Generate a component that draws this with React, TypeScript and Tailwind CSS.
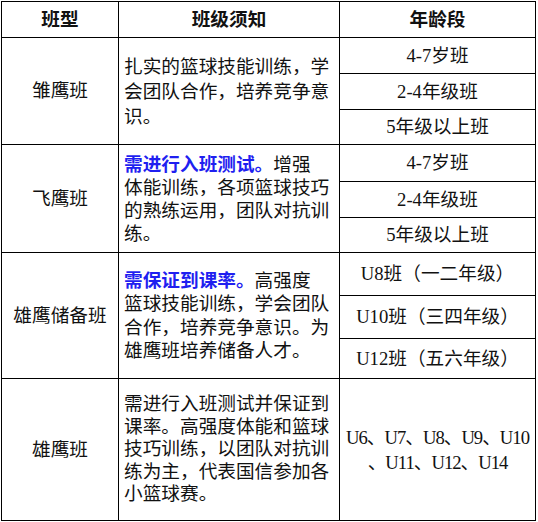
type Seg = { text: string; strong?: boolean };

type Row = {
  name: string;
  notes: Seg[][];
  leading: string;
  ages: string[];
  ageHeights: string[];
};

const FONT = "font-['Liberation_Serif','Noto_Sans_CJK_SC',serif]";

const rows: Row[] = [
  {
    name: "雏鹰班",
    notes: [
      [{ text: "扎实的篮球技能训练，学" }],
      [{ text: "会团队合作，培养竞争意" }],
      [{ text: "识。" }],
    ],
    leading: "leading-[25px]",
    ages: ["4-7岁班", "2-4年级班", "5年级以上班"],
    ageHeights: ["h-[35px]", "h-[35px]", "h-[34px]"],
  },
  {
    name: "飞鹰班",
    notes: [
      [{ text: "需进行入班测试。", strong: true }, { text: "增强" }],
      [{ text: "体能训练，各项篮球技巧" }],
      [{ text: "的熟练运用，团队对抗训" }],
      [{ text: "练。" }],
    ],
    leading: "leading-[23px]",
    ages: ["4-7岁班", "2-4年级班", "5年级以上班"],
    ageHeights: ["h-[36px]", "h-[35px]", "h-[34px]"],
  },
  {
    name: "雄鹰储备班",
    notes: [
      [{ text: "需保证到课率。", strong: true }, { text: "高强度" }],
      [{ text: "篮球技能训练，学会团队" }],
      [{ text: "合作，培养竞争意识。为" }],
      [{ text: "雄鹰班培养储备人才。" }],
    ],
    leading: "leading-[23.5px]",
    ages: ["U8班（一二年级）", "U10班（三四年级）", "U12班（五六年级）"],
    ageHeights: ["h-[42px]", "h-[42px]", "h-[39px]"],
  },
];

function Notes({ lines, leading }: { lines: Seg[][]; leading: string }) {
  return (
    <div className={`flex flex-col justify-center bg-white pl-[5px] ${leading}`}>
      {lines.map((line, i) => (
        <div key={i} className="whitespace-nowrap">
          {line.map((seg, j) =>
            seg.strong ? (
              <span key={j} className="font-bold text-[#1f1ff0]">
                {seg.text}
              </span>
            ) : (
              <span key={j}>{seg.text}</span>
            )
          )}
        </div>
      ))}
    </div>
  );
}

export default function App() {
  return (
    <div className={`bg-white pl-px pt-px text-[18.67px] text-[#111] ${FONT}`}>
      <div className="grid w-[535px] grid-cols-[116px_220px_195px] grid-rows-[35px_106px_107px_125px_141px] gap-px bg-black p-px">
        <div className="flex items-center justify-center bg-white font-bold">班型</div>
        <div className="flex items-center justify-center bg-white font-bold">班级须知</div>
        <div className="flex items-center justify-center bg-white font-bold">年龄段</div>

        {rows.map((row) => (
          <div key={row.name} className="contents">
            <div className="flex items-center justify-center bg-white">{row.name}</div>
            <Notes lines={row.notes} leading={row.leading} />
            <div className="flex flex-col gap-px">
              {row.ages.map((age, i) => (
                <div
                  key={i}
                  className={`flex items-center justify-center bg-white whitespace-nowrap ${row.ageHeights[i]}`}
                >
                  {age}
                </div>
              ))}
            </div>
          </div>
        ))}

        <div className="flex items-center justify-center bg-white">雄鹰班</div>
        <Notes
          leading="leading-[22.5px]"
          lines={[
            [{ text: "需进行入班测试并保证到" }],
            [{ text: "课率。高强度体能和篮球" }],
            [{ text: "技巧训练，以团队对抗训" }],
            [{ text: "练为主，代表国信参加各" }],
            [{ text: "小篮球赛。" }],
          ]}
        />
        <div className="flex flex-col items-center justify-center bg-white leading-[25px] tracking-[-1px] whitespace-nowrap">
          <div>U6、U7、U8、U9、U10</div>
          <div>、U11、U12、U14</div>
        </div>
      </div>
    </div>
  );
}
